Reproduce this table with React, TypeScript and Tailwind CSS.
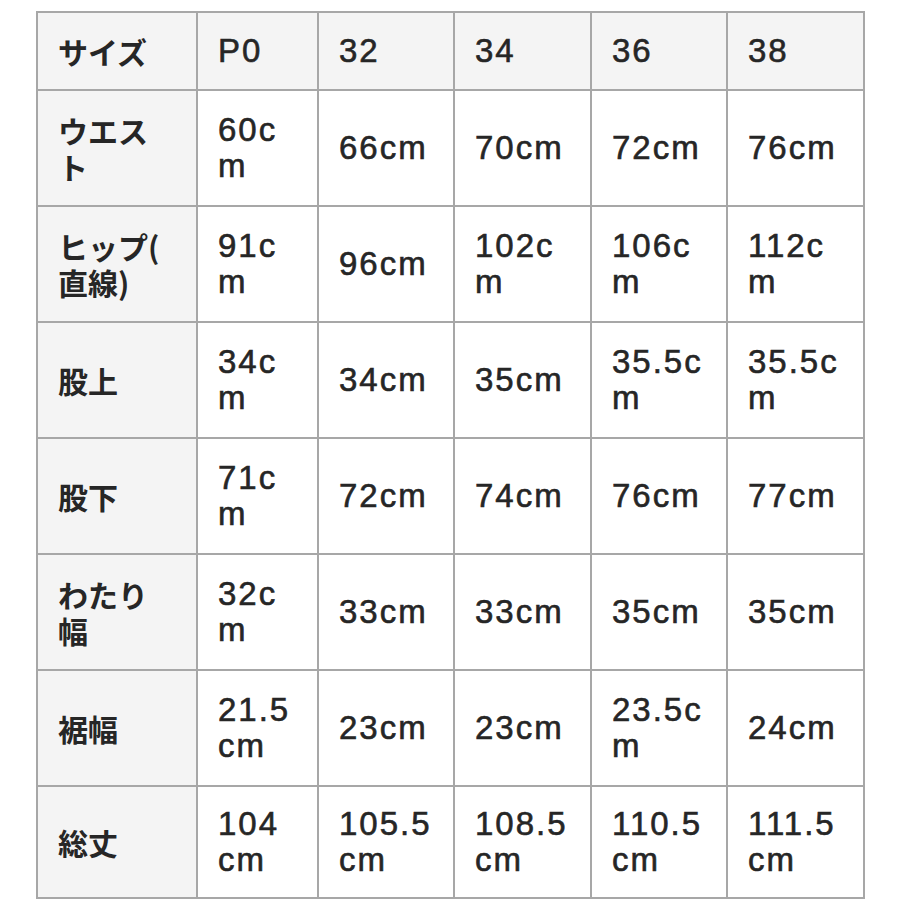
const header = ["サイズ", "P0", "32", "34", "36", "38"]

const rows: string[][] = [
    ["ウエスト", "60cm", "66cm", "70cm", "72cm", "76cm"],
    ["ヒップ(直線)", "91cm", "96cm", "102cm", "106cm", "112cm"],
    ["股上", "34cm", "34cm", "35cm", "35.5cm", "35.5cm"],
    ["股下", "71cm", "72cm", "74cm", "76cm", "77cm"],
    ["わたり幅", "32cm", "33cm", "33cm", "35cm", "35cm"],
    ["裾幅", "21.5cm", "23cm", "23cm", "23.5cm", "24cm"],
    ["総丈", "104cm", "105.5cm", "108.5cm", "110.5cm", "111.5cm"],
]

const labelFont = "font-['Noto_Sans_CJK_JP','Noto_Sans',sans-serif] text-[30px] font-semibold"
const valueFont = "font-['Liberation_Sans','Noto_Sans_CJK_JP',sans-serif] text-[33px] tracking-[2px] [-webkit-text-stroke:0.6px_#262626]"

function Cell({ text, col, gray, last }: { text: string, col: number, gray: boolean, last?: boolean }) {
    const pad = col === 0 ? "pl-[20px] pr-[24px]" : col === 1 ? "pl-[20px] pr-[22px]" : "pl-[20px] pr-[20px]"
    return (
        <div
            className={`flex items-center border-r-2 border-b-2 border-[#a7a7a7] ${pad} ${gray ? "bg-[#f4f4f4]" : "bg-white"} ${last ? "h-[112px]" : ""}`}
        >
            <span className={`block w-full break-all [line-break:anywhere] leading-[36px] text-[#262626] ${col === 0 ? labelFont : valueFont}`}>
                {text}
            </span>
        </div>
    )
}

export default function App() {
    return (
        <div className="w-[900px] h-[900px] overflow-hidden bg-white">
            <div className="ml-[36px] mt-[11px] w-[829px] border-l-2 border-t-2 border-[#a7a7a7] grid grid-cols-[160px_121px_136px_137px_136px_137px] grid-rows-[78px_116px_116px_116px_116px_116px_116px_112px]">
                {header.map((h, i) => (
                    <Cell key={"h" + i} text={h} col={i} gray />
                ))}
                {rows.map((row, r) =>
                    row.map((v, c) => (
                        <Cell key={r + "-" + c} text={v} col={c} gray={c === 0} last={r === rows.length - 1} />
                    ))
                )}
            </div>
        </div>
    )
}
